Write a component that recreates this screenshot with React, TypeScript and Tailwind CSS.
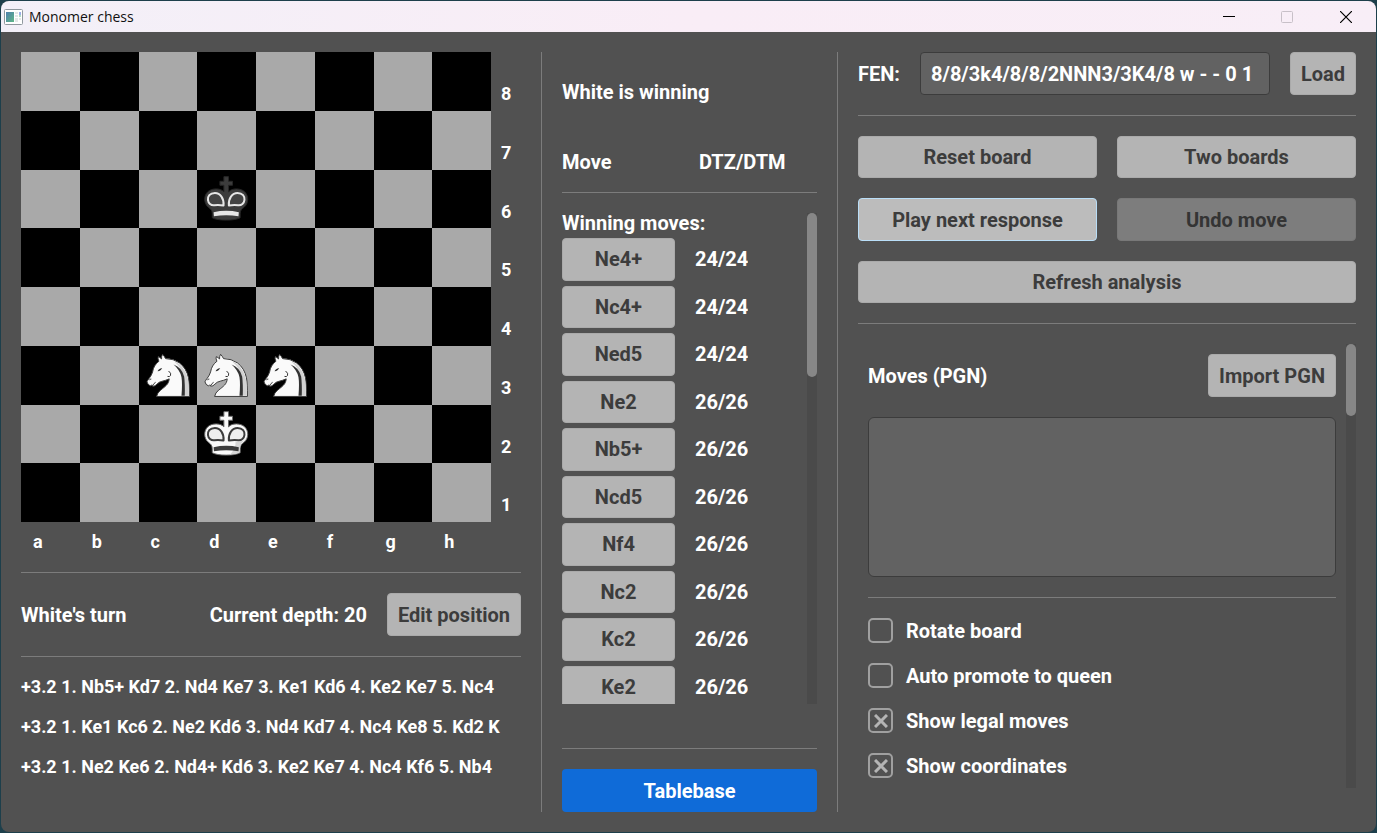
import type { ReactNode } from "react";

type Piece = "K" | "k" | "N";

const PIECES: Record<string, Piece> = { "2-3": "k", "5-2": "N", "5-3": "N", "5-4": "N", "6-3": "K" };
const RANKS = [8, 7, 6, 5, 4, 3, 2, 1];
const FILES = ["a", "b", "c", "d", "e", "f", "g", "h"];

const LINES = [
  "+3.2 1. Nb5+ Kd7 2. Nd4 Ke7 3. Ke1 Kd6 4. Ke2 Ke7 5. Nc4",
  "+3.2 1. Ke1 Kc6 2. Ne2 Kd6 3. Nd4 Kd7 4. Nc4 Ke8 5. Kd2 K",
  "+3.2 1. Ne2 Ke6 2. Nd4+ Kd6 3. Ke2 Ke7 4. Nc4 Kf6 5. Nb4",
];

const MOVES: [string, string][] = [
  ["Ne4+", "24/24"],
  ["Nc4+", "24/24"],
  ["Ned5", "24/24"],
  ["Ne2", "26/26"],
  ["Nb5+", "26/26"],
  ["Ncd5", "26/26"],
  ["Nf4", "26/26"],
  ["Nc2", "26/26"],
  ["Kc2", "26/26"],
  ["Ke2", "26/26"],
];

const OPTIONS = [
  { id: "rotate", label: "Rotate board", checked: false },
  { id: "promote", label: "Auto promote to queen", checked: false },
  { id: "legal", label: "Show legal moves", checked: true },
  { id: "coords", label: "Show coordinates", checked: true },
];

function King({ white }: { white: boolean }) {
  const body = white ? "#f9f9f9" : "#3c3c3c";
  const line = white ? "#3c3c3c" : "#e6e6e6";
  const eye = "M80 107C82 86 70 69 54 69C38 69 32 80 33 90C34 100 42 107 52 106Q66 104 80 107Z";
  return (
    <svg viewBox="0 0 177 177" className="h-full w-full" aria-hidden="true">
      <path
        d="M81 66C72 54 44 54 32 66C20 78 20 100 34 112C42 118 46 122 46 132L46 144Q60 151 88 151Q116 151 130 144L130 132C130 122 134 118 142 112C156 100 156 78 144 66C132 54 104 54 95 66L95 46L107 46L107 34L95 34L95 20L81 20L81 34L69 34L69 46L81 46Z"
        fill={body}
        stroke={white ? "#6a6a6a" : "#262626"}
        strokeWidth="3"
      />
      {white && (
        <path d="M152 82Q152 100 140 109Q129 117 128 143Q118 149 100 149Q118 128 116 112L140 108Q152 98 152 82Z" fill="#d6d6d6" />
      )}
      <g fill={white ? "#eeeeee" : "#444444"} stroke={line} strokeWidth="6" strokeLinejoin="round">
        <path d={eye} />
        <path d={eye} transform="matrix(-1 0 0 1 176 0)" />
      </g>
      <path d="M50 127Q88 119 126 127L125 139Q88 133 51 139Z" fill={line} />
    </svg>
  );
}

function Knight() {
  return (
    <svg viewBox="0 0 177 177" className="h-full w-full" aria-hidden="true">
      <path
        d="M53 152Q55 141 65 133C79 122 90 115 91 99Q80 104 70 106Q60 108 54 115Q48 122 42 121L38 118L34 120Q26 117 24 108Q25 104 31 97Q38 88 41 78Q44 58 60 46Q56 38 58 32Q63 34 68 39Q67 32 71 25Q76 30 80 38Q104 38 122 51Q143 67 149 96Q152 112 152 152Z"
        fill="#fafafa"
        stroke="#3c3c3c"
        strokeWidth="3"
        strokeLinejoin="round"
      />
      <path d="M106 47Q116 49 126 59Q142 76 147 98Q150 112 150 150L138 150Q139 110 134 90Q126 64 106 47Z" fill="#d2d2d2" />
      <path d="M104 56Q130 66 136 92Q139 112 138 150L128 150Q131 112 128 94Q123 72 104 56Z" fill="#333333" />
      <path d="M56 76Q58 69 70 66Q66 74 61 75Z" fill="#333333" />
      <path d="M90 76Q98 82 95 89Q92 94 87 92M32 102Q34 98 36 99M41 119Q44 113 49 110" fill="none" stroke="#333333" strokeWidth="3" strokeLinecap="round" />
    </svg>
  );
}

function Button({ children, className = "" }: { children: ReactNode; className?: string }) {
  return (
    <button
      type="button"
      className={`rounded border border-[#aaaaaa] bg-[#b4b4b4] px-2.5 text-center whitespace-nowrap text-[#3c3c3c] ${className}`}
    >
      {children}
    </button>
  );
}

function Rule() {
  return <hr className="my-5 h-px shrink-0 border-0 bg-[#7c7c7c]" />;
}

function AppIcon() {
  return (
    <svg viewBox="0 0 19 16" className="h-4 w-[19px]" aria-hidden="true">
      <defs>
        <linearGradient id="pane" x1="0" y1="0" x2="1" y2="1">
          <stop offset="0" stopColor="#4f7fae" />
          <stop offset="1" stopColor="#5fb887" />
        </linearGradient>
      </defs>
      <rect x="0.5" y="0.5" width="18" height="15" rx="1" fill="#ffffff" stroke="#90989e" />
      <rect x="2" y="3" width="8" height="10" fill="url(#pane)" />
      <path d="M11 4h3M11 7h3M11 10h3M11 12h3M15 10h2" stroke="#c9d0cf" />
      <path d="M16 3v3" stroke="#3b5fd0" />
      <path d="M16 6v2" stroke="#5fb887" />
    </svg>
  );
}

function TitleBar() {
  return (
    <header className="flex h-[31px] shrink-0 items-center bg-linear-to-r from-[#f3f0f8] via-[#f9edf6] to-[#f8eef7] pl-[3px] text-[#111111]">
      <AppIcon />
      <h1 className="ml-1.5 flex-1 font-['Open_Sans',sans-serif] text-sm font-normal">Monomer chess</h1>
      <button type="button" aria-label="Minimize" className="grid h-full w-[58px] place-items-center">
        <svg viewBox="0 0 12 12" className="size-3"><path d="M0 5.5h12" stroke="#000" /></svg>
      </button>
      <button type="button" aria-label="Maximize" disabled className="grid h-full w-[58px] place-items-center">
        <svg viewBox="0 0 12 12" className="size-3"><rect x="0.5" y="0.5" width="11" height="11" rx="1" fill="none" stroke="#c8c0c8" /></svg>
      </button>
      <button type="button" aria-label="Close" className="grid h-full w-[60px] place-items-center">
        <svg viewBox="0 0 12 12" className="size-3"><path d="M0 0l12 12M12 0L0 12" stroke="#000" strokeWidth="1.2" /></svg>
      </button>
    </header>
  );
}

function Board() {
  return (
    <div className="grid shrink-0 grid-cols-[470px_30px] grid-rows-[470px_30px] text-lg/5">
      <div className="grid grid-cols-8 grid-rows-8">
        {RANKS.map((_, r) =>
          FILES.map((_, c) => {
            const piece = PIECES[`${r}-${c}`];
            return (
              <div key={`${r}-${c}`} className={(r + c) % 2 === 0 ? "bg-[#a9a9a9]" : "bg-black"}>
                {piece === "N" && <Knight />}
                {piece === "K" && <King white />}
                {piece === "k" && <King white={false} />}
              </div>
            );
          }),
        )}
      </div>
      <div className="grid grid-rows-8 pl-2.5">
        {RANKS.map((rank) => (
          <span key={rank} className="pt-8">{rank}</span>
        ))}
      </div>
      <div className="grid grid-cols-8 pt-2.5">
        {FILES.map((file) => (
          <span key={file} className="pl-3">{file}</span>
        ))}
      </div>
    </div>
  );
}

function BoardPanel() {
  return (
    <section className="flex w-[500px] shrink-0 flex-col">
      <Board />
      <Rule />
      <div className="flex items-center gap-5">
        <span className="flex-1">White's turn</span>
        <span>Current depth: 20</span>
        <Button className="h-[43px]">Edit position</Button>
      </div>
      <Rule />
      <ul className="flex flex-col gap-5 text-lg/5 whitespace-nowrap">
        {LINES.map((line) => (
          <li key={line}>{line}</li>
        ))}
      </ul>
    </section>
  );
}

function TablebasePanel() {
  return (
    <section className="flex w-[255px] shrink-0 flex-col">
      <p className="mt-[30px]">White is winning</p>
      <div className="mt-[50px] flex">
        <span className="w-[137px]">Move</span>
        <span>DTZ/DTM</span>
      </div>
      <Rule />
      <div className="mb-6 flex min-h-0 flex-1 justify-between">
        <div className="flex flex-col gap-[5px]">
          <p>Winning moves:</p>
          <div className="min-h-0 flex-1 overflow-hidden">
            <ul className="grid h-[470px] grid-rows-10 gap-[5px]">
              {MOVES.map(([move, score]) => (
                <li key={move} className="flex items-center gap-5">
                  <Button className="h-full w-[113px]">{move}</Button>
                  <span>{score}</span>
                </li>
              ))}
            </ul>
          </div>
        </div>
        <div className="w-2.5 bg-[#4a4a4a]">
          <div className="h-1/3 rounded-full bg-[#878787]" />
        </div>
      </div>
      <Rule />
      <button type="button" className="h-[43px] shrink-0 rounded bg-[#0f6bd8] text-white">Tablebase</button>
    </section>
  );
}

function Option({ id, label, checked }: { id: string; label: string; checked: boolean }) {
  return (
    <div className="flex items-center gap-[13px]">
      <span className="grid size-[25px] place-items-center">
        <input
          id={id}
          type="checkbox"
          defaultChecked={checked}
          className="peer col-start-1 row-start-1 size-[25px] appearance-none rounded-[5px] border-2 border-[#a0a0a0]"
        />
        <svg viewBox="0 0 14 14" className="pointer-events-none invisible col-start-1 row-start-1 size-3.5 peer-checked:visible" aria-hidden="true">
          <path d="M1 1l12 12M13 1L1 13" stroke="#b4b4b4" strokeWidth="3" />
        </svg>
      </span>
      <label htmlFor={id}>{label}</label>
    </div>
  );
}

function ControlPanel() {
  return (
    <section className="flex min-w-0 flex-1 flex-col">
      <div className="flex items-center gap-5">
        <label htmlFor="fen">FEN:</label>
        <input
          id="fen"
          defaultValue="8/8/3k4/8/8/2NNN3/3K4/8 w - - 0 1"
          className="h-[43px] min-w-0 flex-1 rounded border border-[#3c3c3c] bg-[#626262] px-2.5 text-white"
        />
        <Button className="h-[43px]">Load</Button>
      </div>
      <Rule />
      <div className="grid grid-cols-2 gap-5">
        <Button className="h-[42px]">Reset board</Button>
        <Button className="h-[42px]">Two boards</Button>
        <button type="button" className="h-[43px] rounded border border-[#b9def8] bg-[#bcbcbc] text-[#3c3c3c]">Play next response</button>
        <button type="button" disabled className="h-[43px] rounded border border-[#787878] bg-[#7d7d7d] text-[#343434]">Undo move</button>
        <Button className="col-span-2 h-[42px]">Refresh analysis</Button>
      </div>
      <Rule />
      <div className="mb-6 flex min-h-0 flex-1 gap-2.5 overflow-hidden">
        <div className="flex min-w-0 flex-1 flex-col pt-2.5 pl-2.5">
          <div className="flex items-center justify-between">
            <label htmlFor="pgn">Moves (PGN)</label>
            <Button className="h-[43px]">Import PGN</Button>
          </div>
          <textarea id="pgn" className="mt-5 h-[160px] shrink-0 resize-none rounded-md border border-[#3c3c3c] bg-[#626262] p-2.5 text-white" />
          <Rule />
          <div className="flex flex-col gap-5">
            {OPTIONS.map((option) => (
              <Option key={option.id} {...option} />
            ))}
          </div>
        </div>
        <div className="w-2.5 bg-[#4a4a4a]">
          <div className="h-[72px] rounded-full bg-[#878787]" />
        </div>
      </div>
    </section>
  );
}

export default function App() {
  return (
    <div className="h-screen bg-[#1d3f4b] p-px font-['Roboto',sans-serif] text-xl/5 font-bold text-white">
      <div className="flex h-full flex-col overflow-hidden rounded-lg bg-[#515151]">
        <TitleBar />
        <main className="flex min-h-0 flex-1 gap-5 p-5">
          <BoardPanel />
          <div className="w-px bg-[#7c7c7c]" />
          <TablebasePanel />
          <div className="w-px bg-[#7c7c7c]" />
          <ControlPanel />
        </main>
      </div>
    </div>
  );
}
